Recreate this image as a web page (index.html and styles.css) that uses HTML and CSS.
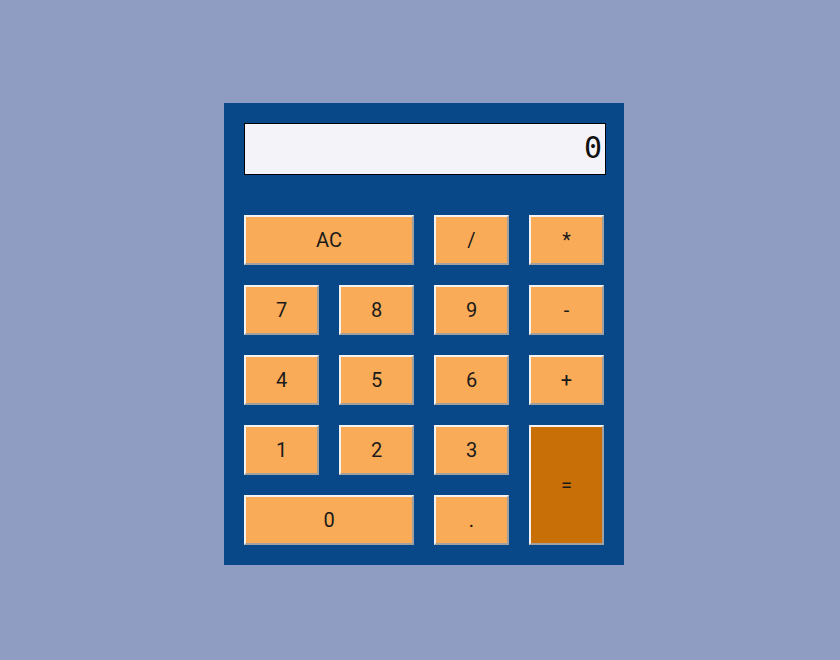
FILE: index.html
```html
<!DOCTYPE html>
<html>
<head>
<meta charset="utf-8">
<link rel="stylesheet" href="styles.css">
</head>
<body>
<div class="page">
  <div class="calculator">
    <div class="display">0</div>
    <div class="keys">
      <button class="key wide">AC</button>
      <button class="key">/</button>
      <button class="key">*</button>
      <button class="key">7</button>
      <button class="key">8</button>
      <button class="key">9</button>
      <button class="key">-</button>
      <button class="key">4</button>
      <button class="key">5</button>
      <button class="key">6</button>
      <button class="key">+</button>
      <button class="key">1</button>
      <button class="key">2</button>
      <button class="key">3</button>
      <button class="key equals">=</button>
      <button class="key wide">0</button>
      <button class="key">.</button>
    </div>
  </div>
</div>
</body>
</html>
```
FILE: styles.css
```css
* { box-sizing: border-box; }
html, body {
  margin: 0;
  padding: 0;
  background: #8f9dc2;
}
.page {
  height: 660px;
  padding: 8px 0 0 8px;
  display: flex;
  align-items: center;
  justify-content: center;
}
.calculator {
  width: 400px;
  background: #084888;
  padding: 20px;
  display: flex;
  flex-direction: column;
  gap: 40px;
}
.display {
  width: 362px;
  height: 52px;
  background: #f5f3fa;
  border: 1px solid #000;
  text-align: right;
  padding-right: 3px;
  font-family: "DejaVu Sans Mono", monospace;
  font-size: 30px;
  line-height: 48px;
  color: #111;
}
.keys {
  display: grid;
  grid-template-columns: repeat(4, 75px);
  grid-auto-rows: 50px;
  gap: 20px;
}
.key {
  margin: 0;
  padding: 0;
  background: #f9ab57;
  border: 2px solid;
  border-color: #f2f2f2 #a0a0a0 #a0a0a0 #f2f2f2;
  font-family: Roboto, sans-serif;
  font-weight: 400;
  font-size: 20px;
  color: #1a1a1a;
  cursor: pointer;
}
.wide { grid-column: span 2; }
.equals {
  grid-column: 4;
  grid-row: span 2;
  background: #c96f07;
}
```
